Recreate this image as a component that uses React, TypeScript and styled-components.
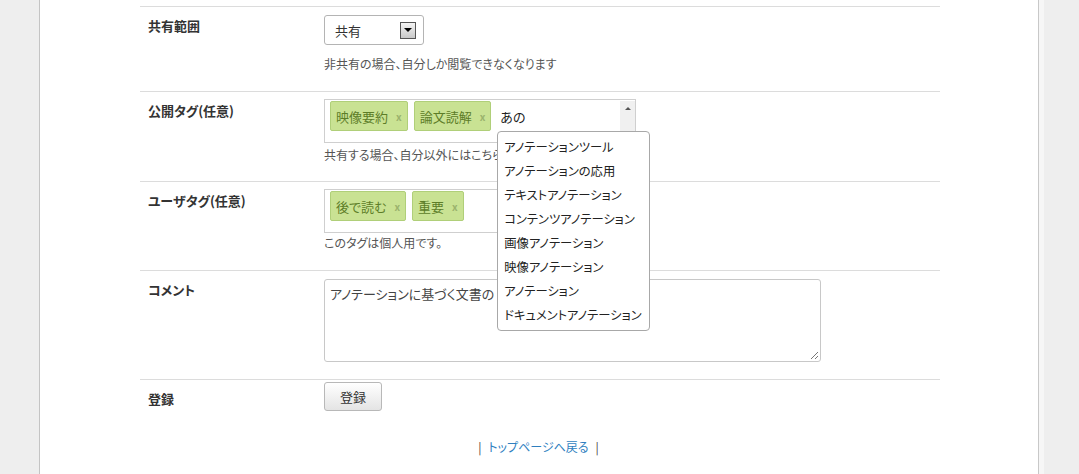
import React from 'react';
import styled, { createGlobalStyle } from 'styled-components';

const GlobalStyle = createGlobalStyle`
    html, body {
        margin: 0;
        padding: 0;
        background: #eeeeee;
        font-family: "Noto Sans CJK JP", "Noto Sans", sans-serif;
        font-feature-settings: "palt";
        color: #333;
    }
`;

const Page = styled.div`
    margin-left: 39px;
    width: 1000px;
    min-height: 474px;
    background: #fff;
    border-left: 1px solid #c4c4c4;
    border-right: 1px solid #c8c8c8;
    box-shadow: 5px 0 0 #f6f6f6;
    padding-top: 6px;
    box-sizing: border-box;
`;

const Form = styled.div`
    width: 800px;
    margin-left: 100px;
`;

const Row = styled.div<{ $bottom: number }>`
    display: grid;
    grid-template-columns: 184px 1fr;
    border-top: 1px solid #dcdcdc;
    padding-bottom: ${p => p.$bottom}px;
`;

const Label = styled.div`
    padding: 10px 0 0 8px;
    font-size: 13px;
    line-height: 18px;
    font-weight: bold;
    color: #333;
`;

const Field = styled.div<{ $top: number }>`
    padding-top: ${p => p.$top}px;
    display: flex;
    flex-direction: column;
    align-items: flex-start;
`;

const Help = styled.div<{ $gap: number }>`
    margin-top: ${p => p.$gap}px;
    font-size: 12px;
    line-height: 18px;
    color: #555;
`;

const Select = styled.div`
    width: 100px;
    height: 30px;
    box-sizing: border-box;
    border: 1px solid #b4b4b4;
    border-radius: 3px;
    display: flex;
    align-items: center;
    justify-content: space-between;
    padding: 0 7px 0 10px;
    font-size: 13px;
    color: #333;
    background: #fff;
`;

const SelectArrow = styled.div`
    width: 16px;
    height: 17px;
    box-sizing: border-box;
    border: 1px solid #555;
    background: linear-gradient(#f4f4f4, #c8c8c8);
    display: flex;
    align-items: center;
    justify-content: center;
    &::after {
        content: '';
        border-left: 4px solid transparent;
        border-right: 4px solid transparent;
        border-top: 4px solid #000;
    }
`;

const TagBox = styled.div`
    width: 312px;
    height: 44px;
    box-sizing: border-box;
    border: 1px solid #cfcfcf;
    padding: 1px 0 0 5px;
    display: flex;
    align-items: flex-start;
    gap: 6px;
`;

const Tag = styled.div`
    height: 30px;
    box-sizing: border-box;
    background: #c9e293;
    border: 1px solid #b0cf79;
    border-radius: 2px;
    display: flex;
    align-items: center;
    padding: 0 5px 0 5px;
    gap: 8px;
    font-size: 13px;
    color: #5d7d28;
`;

const TagClose = styled.span`
    font-size: 10px;
    font-weight: bold;
    color: #9bb36d;
`;

const TagInput = styled.div`
    position: relative;
    flex: 1;
    height: 30px;
    display: flex;
    align-items: center;
    padding-left: 3px;
    font-size: 13px;
    color: #222;
`;

const ScrollBar = styled.div`
    position: absolute;
    right: 0;
    top: 0;
    width: 15px;
    height: 30px;
    background: #f0f0f0;
    display: flex;
    justify-content: center;
    padding-top: 6px;
    box-sizing: border-box;
    &::after {
        content: '';
        width: 0;
        height: 0;
        border-left: 3px solid transparent;
        border-right: 3px solid transparent;
        border-bottom: 3px solid #555;
    }
`;

const Menu = styled.ul`
    position: absolute;
    left: 0;
    top: 30px;
    width: 153px;
    box-sizing: border-box;
    margin: 0;
    padding: 3px 0;
    list-style: none;
    background: #fff;
    border: 1px solid #a8a8a8;
    border-radius: 4px;
    z-index: 10;
`;

const MenuItem = styled.li`
    height: 24px;
    line-height: 24px;
    padding-left: 6px;
    font-size: 12.3px;
    color: #222;
    white-space: nowrap;
`;

const TextArea = styled.div`
    position: relative;
    width: 497px;
    height: 83px;
    box-sizing: border-box;
    border: 1px solid #c8c8c8;
    border-radius: 3px;
    padding: 4px 5px;
    font-size: 13px;
    line-height: 20px;
    color: #444;
`;

const Grip = styled.svg`
    position: absolute;
    right: 1px;
    bottom: 1px;
`;

const Button = styled.div`
    width: 58px;
    height: 29px;
    box-sizing: border-box;
    border: 1px solid #b8b8b8;
    border-radius: 3px;
    background: linear-gradient(#ffffff, #e4e4e4);
    display: flex;
    align-items: center;
    justify-content: center;
    font-size: 13px;
    color: #333;
`;

const Footer = styled.div`
    text-align: center;
    padding-top: 27px;
    font-size: 12px;
    color: #444;
    margin-left: -1px;
`;

const FooterLink = styled.a`
    color: #2f7fbf;
    text-decoration: none;
    margin: 0 7px;
`;

const suggestions = [
    'アノテーションツール',
    'アノテーションの応用',
    'テキストアノテーション',
    'コンテンツアノテーション',
    '画像アノテーション',
    '映像アノテーション',
    'アノテーション',
    'ドキュメントアノテーション',
];

const TagChip = ({ label }: { label: string }) => (
    <Tag>
        {label}
        <TagClose>x</TagClose>
    </Tag>
);

export default function App() {
    return (
        <>
            <GlobalStyle />
            <Page>
                <Form>
                    <Row $bottom={18}>
                        <Label>共有範囲</Label>
                        <Field $top={8}>
                            <Select>
                                共有
                                <SelectArrow />
                            </Select>
                            <Help $gap={10}>非共有の場合、自分しか閲覧できなくなります</Help>
                        </Field>
                    </Row>
                    <Row $bottom={17}>
                        <Label>公開タグ(任意)</Label>
                        <Field $top={7}>
                            <TagBox>
                                <TagChip label="映像要約" />
                                <TagChip label="論文読解" />
                                <TagInput>
                                    あの
                                    <ScrollBar />
                                    <Menu>
                                        {suggestions.map(s => (
                                            <MenuItem key={s}>{s}</MenuItem>
                                        ))}
                                    </Menu>
                                </TagInput>
                            </TagBox>
                            <Help $gap={3}>共有する場合、自分以外にはこちらのタグが表示されます</Help>
                        </Field>
                    </Row>
                    <Row $bottom={18}>
                        <Label>ユーザタグ(任意)</Label>
                        <Field $top={7}>
                            <TagBox>
                                <TagChip label="後で読む" />
                                <TagChip label="重要" />
                            </TagBox>
                            <Help $gap={1}>このタグは個人用です。</Help>
                        </Field>
                    </Row>
                    <Row $bottom={17}>
                        <Label>コメント</Label>
                        <Field $top={8}>
                            <TextArea>
                                アノテーションに基づく文書の
                                <Grip width="9" height="9" viewBox="0 0 9 9">
                                    <path d="M8 1 L1 8 M8 5 L5 8" stroke="#777" strokeWidth="1" />
                                </Grip>
                            </TextArea>
                        </Field>
                    </Row>
                    <Row $bottom={0}>
                        <Label>登録</Label>
                        <Field $top={2}>
                            <Button>登録</Button>
                        </Field>
                    </Row>
                </Form>
                <Footer>
                    |<FooterLink href="#">トップページへ戻る</FooterLink>|
                </Footer>
            </Page>
        </>
    );
}
